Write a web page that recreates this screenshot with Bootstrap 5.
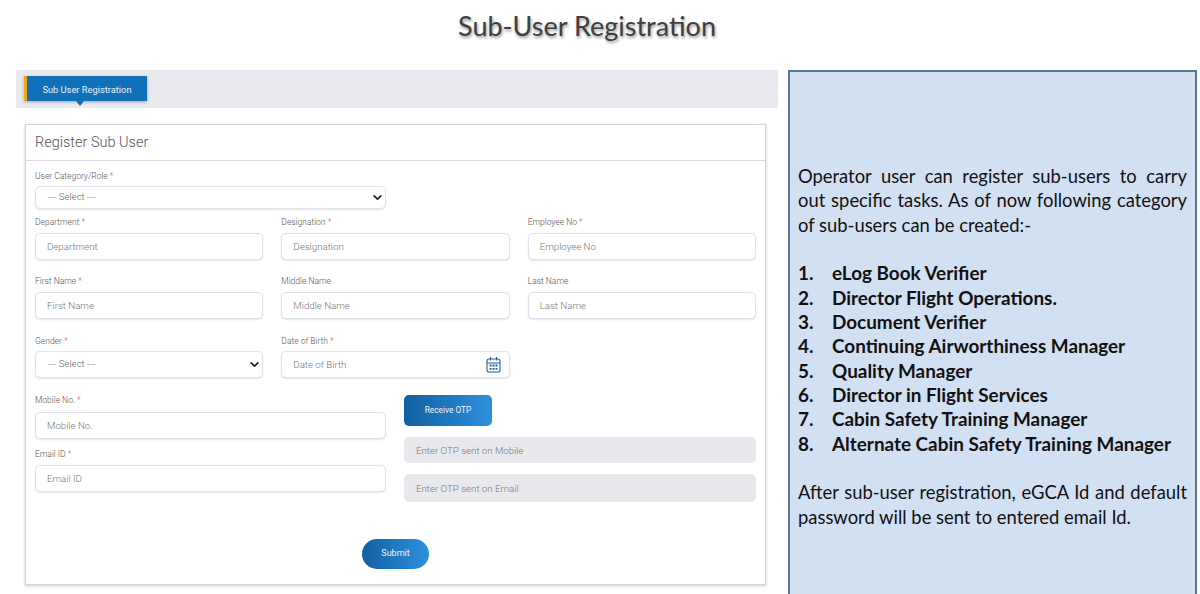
<!DOCTYPE html>
<html lang="en">
<head>
<meta charset="utf-8">
<title>Sub-User Registration</title>
<link href="https://cdn.jsdelivr.net/npm/bootstrap@5.3.0/dist/css/bootstrap.min.css" rel="stylesheet">
<style>
html,body{height:594px;overflow:hidden;background:#fff}
body{font-family:Roboto,"Liberation Sans",sans-serif}
.slide-title{height:70px;margin:0;padding:8px 26px 0 0;font-family:Lato,"Liberation Sans",sans-serif;font-size:27px;line-height:36px;font-weight:400;color:#404040;text-shadow:1px 2px 3px #999;text-align:center}
.work-area{padding-left:16px;gap:10px}
.left-side{width:762px}
.tab-bar{height:38px;background:#e9e9f0;padding:6px 0 0 8px}
.tab-item{position:relative;width:123px;height:25px;border-left:3px solid #f0a818;background:#1070ba;color:#e8f3fb;font-size:9.3px;line-height:27px;text-align:center;box-shadow:0 1px 3px rgba(0,0,0,.3)}
.tab-item::after{content:"";position:absolute;left:49px;bottom:-5px;border-style:solid;border-width:5px 4px 0;border-color:#1070ba transparent transparent}
.reg-card{width:741px;height:461px;margin:16px 0 0 9px;border:1px solid #d9d0dc;border-radius:0;box-shadow:0 1px 3px rgba(0,0,0,.2)}
.reg-card .card-header{height:36px;padding:0 9px;background:#fff;border-bottom:1px solid #d8d8de;font-size:14.5px;font-weight:300;line-height:35px;color:#555}
.reg-card .card-body{padding:9px 9px 0}
.field-label{display:block;height:12px;margin:0 0 5px;font-size:8.5px;line-height:12px;font-weight:300;color:#555}
.first-label{margin-bottom:4px}
.req{color:#d9435e}
.reg-card .form-control,.reg-card .form-select{font-size:9.7px;font-weight:300;color:#666;border:1px solid #e2e2ea;border-radius:5px;box-shadow:0 1px 2px rgba(0,0,0,.1);padding:0 11px}
.reg-card .form-select{padding-left:12px}
.reg-card .form-control::placeholder{color:#777;opacity:1}
.reg-card .form-select{height:23px;min-height:0;background-image:url("data:image/svg+xml,%3csvg xmlns='http://www.w3.org/2000/svg' viewBox='0 0 16 16'%3e%3cpath fill='none' stroke='%23222' stroke-width='3' stroke-linecap='round' stroke-linejoin='round' d='m2 5 6 6 6-6'/%3e%3c/svg%3e");background-size:9px 9px;background-position:right 3px center}
.ctl-h{height:27px;min-height:0}
.ctl-sel{height:27px!important}
.grid-row{--bs-gutter-x:18px;--bs-gutter-y:0}
.top-select{width:351px;margin-bottom:7px}
.row-gap-a{margin-bottom:15px}
.row-gap-b{margin-bottom:16px}
.row-gap-c{margin-bottom:16px}
.tight-label{margin-bottom:4px}
.lower-left{width:369px}
.lower-right{width:370px}
.mobile-label{margin-bottom:6px}
.cal-icon{position:absolute;right:9px;top:5px;width:15px;height:17px}
.otp-btn{display:block;width:88px;height:31px;padding:0;border:0;border-radius:5px;font-size:8.3px;color:#f0f6fb;background:linear-gradient(90deg,#11609f,#2e90de);margin:1px 0 11px}
.otp-field{height:26px!important;background:#e8e8ed!important;border-color:#e8e8ed!important;box-shadow:none!important;margin-bottom:11px}
.otp-field.mail-field{height:28px!important}
.left-gap{margin-bottom:9px}
.submit-row{margin-top:26px}
.submit-btn{width:67px;height:30px;padding:0;border:0;border-radius:15px;font-size:9px;color:#f0f6fb;background:linear-gradient(90deg,#11609f,#2e90de)}
.info-panel{width:409px;height:540px;background:#d2e0f3;border:2px solid #5c7696;padding:92px 8px 0;font-family:Lato,"Liberation Sans",sans-serif;font-size:18.9px;line-height:24.35px;color:#111}
.info-panel p{margin:0;text-align:justify;font-size:18.4px}
.info-panel .first-par{margin-bottom:24.35px}
.info-list{margin:0 0 24.35px;padding-left:34px;font-weight:700;list-style:none;counter-reset:step}
.info-list li{counter-increment:step}
.info-list li::before{content:counter(step) ".";display:inline-block;width:34px;margin-left:-34px}
</style>
</head>
<body>
<h1 class="slide-title">Sub-User Registration</h1>
<div class="d-flex work-area align-items-start">
  <div class="left-side">
    <div class="tab-bar"><div class="tab-item">Sub User Registration</div></div>
    <div class="card reg-card">
      <div class="card-header">Register Sub User</div>
      <div class="card-body">
        <label class="field-label first-label">User Category/Role <span class="req">*</span></label>
        <select class="form-select top-select"><option>--- Select ---</option></select>
        <div class="row grid-row row-gap-a">
          <div class="col-4"><label class="field-label">Department <span class="req">*</span></label><input class="form-control ctl-h" placeholder="Department"></div>
          <div class="col-4"><label class="field-label">Designation <span class="req">*</span></label><input class="form-control ctl-h" placeholder="Designation"></div>
          <div class="col-4"><label class="field-label">Employee No <span class="req">*</span></label><input class="form-control ctl-h" placeholder="Employee No"></div>
        </div>
        <div class="row grid-row row-gap-b">
          <div class="col-4"><label class="field-label">First Name <span class="req">*</span></label><input class="form-control ctl-h" placeholder="First Name"></div>
          <div class="col-4"><label class="field-label">Middle Name</label><input class="form-control ctl-h" placeholder="Middle Name"></div>
          <div class="col-4"><label class="field-label">Last Name</label><input class="form-control ctl-h" placeholder="Last Name"></div>
        </div>
        <div class="row grid-row row-gap-c">
          <div class="col-4"><label class="field-label tight-label">Gender <span class="req">*</span></label><select class="form-select ctl-sel"><option>--- Select ---</option></select></div>
          <div class="col-4"><label class="field-label tight-label">Date of Birth <span class="req">*</span></label>
            <div class="position-relative"><input class="form-control ctl-h" placeholder="Date of Birth">
              <svg class="cal-icon" viewBox="0 0 15 17" fill="none" stroke="#1f6298" stroke-width="1.1"><rect x="1" y="3" width="13" height="13" rx="2"/><path d="M1 7h13M4.500 1v3.500M10.500 1v3.500"/><path d="M3.500 9.500h2M6.500 9.500h2M9.500 9.500h2M3.500 12.800h2M6.500 12.800h2M9.500 12.800h2" stroke-width="1.800"/></svg>
            </div></div>
        </div>
        <div class="row grid-row">
          <div class="lower-left">
            <label class="field-label mobile-label">Mobile No. <span class="req">*</span></label>
            <input class="form-control ctl-h left-gap" placeholder="Mobile No.">
            <label class="field-label">Email ID <span class="req">*</span></label>
            <input class="form-control ctl-h" placeholder="Email ID">
          </div>
          <div class="lower-right">
            <button type="button" class="btn otp-btn">Receive OTP</button>
            <input class="form-control otp-field" placeholder="Enter OTP sent on Mobile">
            <input class="form-control otp-field mail-field" placeholder="Enter OTP sent on Email">
          </div>
        </div>
        <div class="text-center submit-row"><button type="button" class="btn submit-btn">Submit</button></div>
      </div>
    </div>
  </div>
  <div class="info-panel">
    <p class="first-par">Operator user can register sub-users to carry out specific tasks. As of now following category of sub-users can be created:-</p>
    <ol class="info-list">
      <li>eLog Book Verifier</li>
      <li>Director Flight Operations.</li>
      <li>Document Verifier</li>
      <li>Continuing Airworthiness Manager</li>
      <li>Quality Manager</li>
      <li>Director in Flight Services</li>
      <li>Cabin Safety Training Manager</li>
      <li>Alternate Cabin Safety Training Manager</li>
    </ol>
    <p>After sub-user registration, eGCA Id and default password will be sent to entered email Id.</p>
  </div>
</div>
<script src="https://cdn.jsdelivr.net/npm/bootstrap@5.3.0/dist/js/bootstrap.bundle.min.js"></script>
</body>
</html>
